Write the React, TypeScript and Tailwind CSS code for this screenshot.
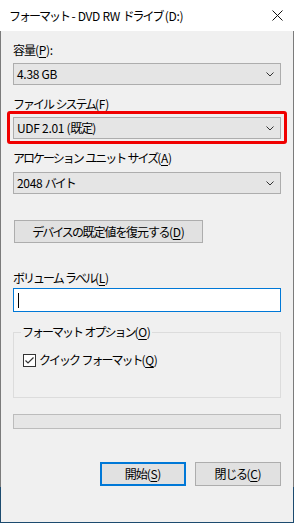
import { type ReactNode } from "react";

const FONT = "font-['Noto_Sans_CJK_JP','Noto_Sans',sans-serif]";

// Meiryo UI has narrow, proportional kana: tighten runs by script
function T({ s }: { s: string }) {
  const runs = s.match(/[\u30A0-\u30FF]+|[\u3040-\u309F]+|[\u4E00-\u9FFF]+|[^\u3040-\u30FF\u4E00-\u9FFF]+/g) ?? [];
  return (
    <>
      {runs.map((r, i) => {
        let cls = "tracking-[-0.3px]";
        if (/[\u30A0-\u30FF]/.test(r)) cls = "tracking-[-2px]";
        else if (/[\u3040-\u309F]/.test(r)) cls = "tracking-[-1.5px]";
        else if (/[\u4E00-\u9FFF]/.test(r)) cls = "tracking-[-1px]";
        return (
          <span key={i} className={cls}>
            {r}
          </span>
        );
      })}
    </>
  );
}

function Key({ children }: { children: ReactNode }) {
  return <span className="underline underline-offset-[2px] decoration-[1px] tracking-[-0.3px]">{children}</span>;
}

function Chevron() {
  return (
    <svg width="8" height="5" viewBox="0 0 8 5" className="shrink-0">
      <path d="M0.5 0.5 L4 4 L7.5 0.5" fill="none" stroke="#333" strokeWidth="1" />
    </svg>
  );
}

function Combo({ value }: { value: string }) {
  return (
    <div className="h-[22px] flex items-center justify-between bg-[#e5e5e5] border border-[#adadad] pl-[3px] pr-[6px]">
      <span className="leading-[20px]">
        <T s={value} />
      </span>
      <Chevron />
    </div>
  );
}

function Label({ children, className = "" }: { children: ReactNode; className?: string }) {
  return <div className={`h-[16px] leading-[16px] ${className}`}>{children}</div>;
}

export default function App() {
  return (
    <div
      className={`w-[294px] h-[523px] px-px pb-px bg-[linear-gradient(to_bottom,#ffffff_31px,#7b7b7b_31px,#7b7b7b_487px,#1c4b6f_487px)] text-[12px] text-black ${FONT}`}
    >
      <div className="h-full flex flex-col bg-[#f0f0f0]">
        {/* title bar */}
        <div className="h-[31px] bg-white flex items-center justify-between pl-[8px] pr-[10px]">
          <span className="leading-[16px]">
            <T s="フォーマット - DVD RW ドライブ (D:)" />
          </span>
          <svg width="11" height="11" viewBox="0 0 11 11">
            <path d="M0.5 0.5 L10.5 10.5 M10.5 0.5 L0.5 10.5" stroke="#111" strokeWidth="1" />
          </svg>
        </div>

        <div className="flex flex-col px-[12px] pt-[11px]">
          <Label>
            <T s="容量(" />
            <Key>P</Key>
            <T s="):" />
          </Label>
          <div className="mt-[5px]">
            <Combo value="4.38 GB" />
          </div>

          <Label className="mt-[11px]">
            <T s="ファイル システム(" />
            <Key>F</Key>)
          </Label>
          <div className="mt-[5px] relative">
            <Combo value="UDF 2.01 (既定)" />
            <div className="absolute -inset-x-[6px] -top-[6px] -bottom-[5px] border-[3px] border-[#f00000] rounded-[3px]" />
          </div>

          <Label className="mt-[11px]">
            <T s="アロケーション ユニット サイズ(" />
            <Key>A</Key>)
          </Label>
          <div className="mt-[6px]">
            <Combo value="2048 バイト" />
          </div>

          <button className="mt-[26px] ml-px w-[189px] h-[23px] bg-[#e1e1e1] border border-[#adadad] leading-[21px] text-center">
            <T s="デバイスの既定値を復元する(" />
            <Key>D</Key>)
          </button>

          <Label className="mt-[27px]">
            <T s="ボリューム ラベル(" />
            <Key>L</Key>)
          </Label>
          <div className="mt-[2px] h-[24px] bg-white border border-[#0078d7] flex items-center pl-[4px]">
            <div className="w-px h-[15px] bg-black" />
          </div>

          {/* group box */}
          <fieldset className="mt-[13px] h-[73px] border border-[#dcdcdc] px-[9px] pt-[13px] m-0">
            <legend className="px-[1px] ml-[-2px] leading-[14px]">
              <T s="フォーマット オプション(" />
              <Key>O</Key>)
            </legend>
            <div className="flex items-center gap-[3px]">
              <div className="w-[13px] h-[13px] border border-[#333] bg-white flex items-center justify-center">
                <svg width="11" height="11" viewBox="0 0 11 11">
                  <path d="M1.5 5.5 L4 8 L9.5 2.5" fill="none" stroke="#333" strokeWidth="1.2" />
                </svg>
              </div>
              <span className="leading-[16px]">
                <T s="クイック フォーマット(" />
                <Key>Q</Key>)
              </span>
            </div>
          </fieldset>

          <div className="mt-[16px] h-[15px] bg-[#e6e6e6] border border-[#bcbcbc]" />

          <div className="mt-[33px] flex justify-end gap-[9px]">
            <button className="w-[86px] h-[24px] bg-[#e1e1e1] border-2 border-[#0078d7] leading-[20px] text-center">
              <T s="開始(" />
              <Key>S</Key>)
            </button>
            <button className="w-[86px] h-[24px] bg-[#e1e1e1] border border-[#adadad] leading-[22px] text-center">
              <T s="閉じる(" />
              <Key>C</Key>)
            </button>
          </div>
        </div>
      </div>
    </div>
  );
}
